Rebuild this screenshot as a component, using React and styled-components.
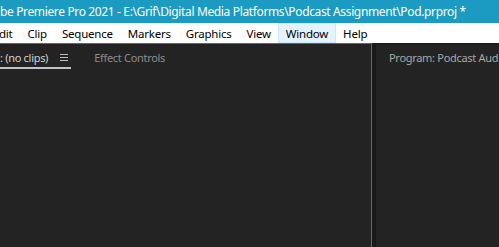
import React from "react";
import styled, { createGlobalStyle } from "styled-components";

const Global = createGlobalStyle`
  html, body { margin: 0; padding: 0; background: #232323; }
  #root { width: 499px; height: 247px; overflow: hidden; }
`;

const Frame = styled.div`
  width: 499px;
  height: 247px;
  display: flex;
  flex-direction: column;
  overflow: hidden;
  font-family: "Noto Sans", "Open Sans", sans-serif;
`;

const TitleBar = styled.div`
  height: 23px;
  flex: none;
  background: #1b9ac2;
  color: #ffffff;
  font-size: 12px;
  letter-spacing: -0.36px;
  display: flex;
  align-items: center;
  white-space: nowrap;
  overflow: hidden;
  padding-bottom: 1px;
  box-sizing: border-box;
`;

const MenuBar = styled.div`
  height: 20px;
  flex: none;
  background: #ffffff;
  display: flex;
  align-items: stretch;
  margin-left: -8.5px;
  font-size: 11.5px;
  letter-spacing: -0.22px;
  color: #000;
`;

const MenuItem = styled.div`
  display: flex;
  align-items: center;
  padding: 0 6.5px;
  border: 1px solid ${(p) => (p.$hover ? "#cce8ff" : "transparent")};
  background: ${(p) => (p.$hover ? "#e5f3ff" : "transparent")};
  white-space: nowrap;
  box-sizing: border-box;
`;

const Workspace = styled.div`
  flex: 1;
  display: grid;
  grid-template-columns: 372px 1fr;
  column-gap: 4px;
  background: #1a1a1a;
  min-height: 0;
`;

const Panel = styled.div`
  background: #232323;
  border-top: 1px solid ${(p) => (p.$focused ? "#3a6cb4" : "#1a1a1a")};
  border-right: 1px solid ${(p) => (p.$focused ? "#3a6cb4" : "transparent")};
  display: flex;
  flex-direction: column;
  min-width: 0;
  overflow: hidden;
`;

const TabRow = styled.div`
  height: 25px;
  display: flex;
  align-items: stretch;
  gap: 23px;
  font-size: 11px;
  letter-spacing: -0.3px;
  white-space: nowrap;
  padding-left: ${(p) => p.$pad || 0}px;
`;

const Tab = styled.div`
  display: flex;
  align-items: center;
  gap: 12px;
  padding: 3px 3px 2px 0;
  color: ${(p) => (p.$active ? "#d2d2d2" : p.$title ? "#a8a8a8" : "#8c8c8c")};
  box-shadow: ${(p) => (p.$active ? "inset 0 -2px 0 #c4c4c4" : "none")};
  box-sizing: border-box;
`;

const Menu = () => (
  <svg width="8" height="7" viewBox="0 0 8 7">
    <rect x="0" y="0" width="8" height="1" fill="#bdbdbd" />
    <rect x="0" y="3" width="8" height="1" fill="#bdbdbd" />
    <rect x="0" y="6" width="8" height="1" fill="#bdbdbd" />
  </svg>
);

const menus = ["dit", "Clip", "Sequence", "Markers", "Graphics", "View", "Window", "Help"];

export default function App() {
  return (
    <Frame>
      <Global />
      <TitleBar>
        be Premiere Pro 2021 - E:\Grif\Digital Media Platforms\Podcast Assignment\Pod.prproj *
      </TitleBar>
      <MenuBar>
        {menus.map((m) => (
          <MenuItem key={m} $hover={m === "Window"}>
            {m}
          </MenuItem>
        ))}
      </MenuBar>
      <Workspace>
        <Panel $focused>
          <TabRow>
            <Tab $active>
              : (no clips)
              <Menu />
            </Tab>
            <Tab>Effect Controls</Tab>
          </TabRow>
        </Panel>
        <Panel>
          <TabRow $pad={13}>
            <Tab $title>Program: Podcast Aud</Tab>
          </TabRow>
        </Panel>
      </Workspace>
    </Frame>
  );
}
